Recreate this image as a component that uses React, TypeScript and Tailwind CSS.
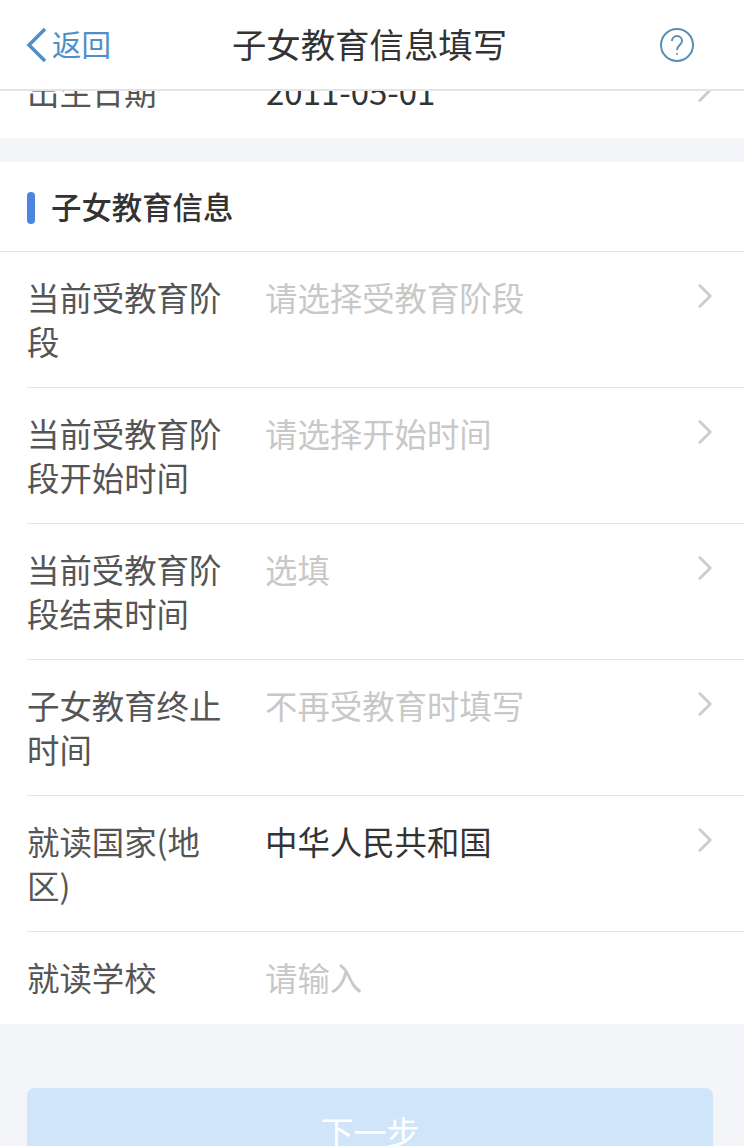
import { ChevronRight } from 'lucide-react';

const rows = [
  { label: '当前受教育阶段', placeholder: '请选择受教育阶段' },
  { label: '当前受教育阶段开始时间', placeholder: '请选择开始时间' },
  { label: '当前受教育阶段结束时间', placeholder: '选填' },
  { label: '子女教育终止时间', placeholder: '不再受教育时填写' },
  { label: '就读国家(地区)', value: '中华人民共和国' },
];

function FormRow({ label, placeholder, value }: { label: string; placeholder?: string; value?: string }) {
  return (
    <div className="ml-[27px] flex h-[136px] border-b border-[#e6e6e6] pt-[23px]">
      <div className="w-[196px] text-[32.4px] leading-[44px] text-[#555555]">{label}</div>
      <div className={`ml-[42px] flex-1 text-[32.4px] leading-[44px] ${value ? 'text-[#333333]' : 'text-[#c8c8c8]'}`}>
        {value ?? placeholder}
      </div>
      <ChevronRight className="mr-[18px] mt-0 h-[42px] w-[42px] text-[#cccccc]" strokeWidth={1.6} />
    </div>
  );
}

export default function App() {
  return (
    <div className="flex h-[1146px] w-[744px] flex-col overflow-hidden bg-[#f4f5f9] font-['Noto_Sans_CJK_SC','Noto_Sans',sans-serif]">
      <header className="relative flex h-[91px] shrink-0 items-center border-b-2 border-[#e4e4e4] bg-white">
        <div className="ml-[24px] flex items-center text-[#4f8fc9]">
          <svg width="24" height="36" viewBox="0 0 24 36" fill="none" stroke="currentColor" strokeWidth="3.5">
            <path d="M21 2 5 18l16 16" />
          </svg>
          <span className="ml-[4px] -translate-y-[1px] text-[29.5px] leading-none">返回</span>
        </div>
        <h1 className="flex-1 -translate-y-[1px] pr-[31px] text-center text-[34.4px] font-normal leading-none text-[#333333]">
          子女教育信息填写
        </h1>
        <svg className="mr-[49px]" width="36" height="36" viewBox="0 0 36 36" fill="none" stroke="#5a8eb4" strokeWidth="2">
          <circle cx="18" cy="18" r="16" />
          <path d="M13 14c0-3 2.200-5 5-5s5 2 5 5c0 4-5 4-5 9" />
          <circle cx="18" cy="27" r="1" fill="#5a8eb4" stroke="none" />
        </svg>
      </header>

      <div className="flex h-[47px] shrink-0 overflow-hidden bg-white pl-[27px]">
        <div className="-mt-[22px] w-[239px] text-[32.4px] leading-[44px] text-[#555555]">出生日期</div>
        <div className="-mt-[22px] flex-1 text-[33px] leading-[44px] text-[#333333]">2011-05-01</div>
        <ChevronRight className="-mt-[22px] mr-[18px] h-[42px] w-[42px] text-[#cccccc]" strokeWidth={1.6} />
      </div>

      <div className="mt-[24px] bg-white">
        <div className="flex h-[90px] items-center border-b border-[#e6e6e6] pl-[27px]">
          <div className="translate-y-[1px] h-[32px] w-[8px] rounded-full bg-[#4a86e0]" />
          <h2 className="ml-[16px] text-[30.4px] font-medium leading-none text-[#333333]">子女教育信息</h2>
        </div>
        {rows.map((row) => (
          <FormRow key={row.label} {...row} />
        ))}
        <div className="ml-[27px] flex h-[92px] items-center pb-[2px]">
          <div className="w-[238px] text-[32.4px] leading-[44px] text-[#555555]">就读学校</div>
          <div className="text-[32.4px] leading-[44px] text-[#c8c8c8]">请输入</div>
        </div>
      </div>

      <button className="mx-[27px] mt-[64px] h-[84px] w-[686px] shrink-0 rounded-[8px] bg-[#d0e5f9] pt-[3px] text-[33px] leading-none text-white">
        下一步
      </button>
    </div>
  );
}
